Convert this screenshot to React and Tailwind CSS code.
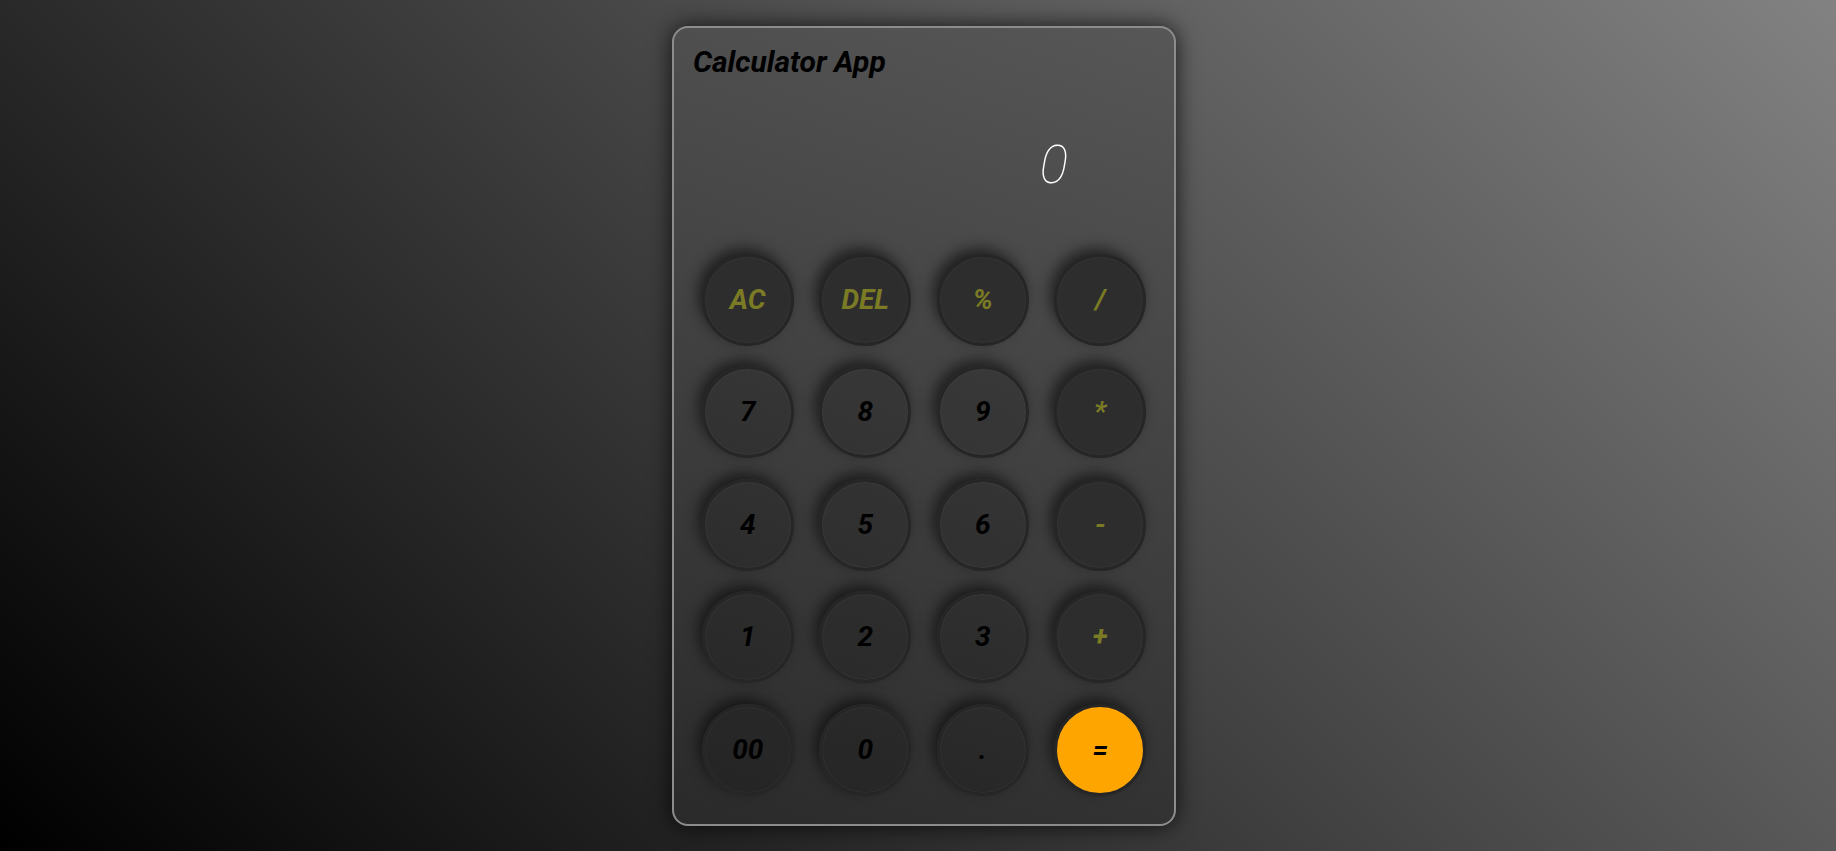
import React, { useState } from "react";

const keys = [
  { k: "AC", op: true },
  { k: "DEL", op: true },
  { k: "%", op: true },
  { k: "/", op: true },
  { k: "7" },
  { k: "8" },
  { k: "9" },
  { k: "*", op: true },
  { k: "4" },
  { k: "5" },
  { k: "6" },
  { k: "-", op: true },
  { k: "1" },
  { k: "2" },
  { k: "3" },
  { k: "+", op: true },
  { k: "00" },
  { k: "0" },
  { k: "." },
  { k: "=", eq: true },
];

export default function App() {
  const [value, setValue] = useState("0");

  const press = (k) => {
    if (k === "AC") return setValue("0");
    if (k === "DEL") return setValue((v) => (v.length > 1 ? v.slice(0, -1) : "0"));
    if (k === "=") {
      try {
        // eslint-disable-next-line no-new-func
        const r = Function(`return (${value})`)();
        setValue(String(r));
      } catch {
        setValue("Error");
      }
      return;
    }
    setValue((v) => (v === "0" && k !== "." ? k : v + k));
  };

  return (
    <div className="w-full h-[851px] flex items-center justify-center pl-[12px] bg-[linear-gradient(45deg,#000000,#828282)] font-['Roboto',sans-serif]">
      <div className="w-[504px] h-[800px] rounded-[16px] border-2 border-[#8c8c8c] bg-[linear-gradient(200deg,#575757,#2a2a2a)] shadow-[0_0_22px_rgba(0,0,0,0.75)] flex flex-col px-[19px] pt-[14px]">
        <h1 className="text-[30px] font-bold italic text-black leading-[40px]">Calculator App</h1>
        <div className="h-[150px] flex items-center justify-end pr-[87px] pt-[18px]">
          <span className="text-[53px] font-thin italic text-white leading-none">{value}</span>
        </div>
        <div className="grid grid-cols-[repeat(4,92px)] justify-center gap-x-[25.5px] gap-y-[20.5px] mt-[22px]">
          {keys.map(({ k, op, eq }) => (
            <button
              key={k}
              onClick={() => press(k)}
              className={
                "w-[92px] h-[92px] rounded-full border-[3px] border-[#262626] flex items-center justify-center text-[28px] font-bold italic shadow-[-4px_-6px_14px_rgba(0,0,0,0.55),inset_0_0_0_1px_rgba(255,255,255,0.04)] " +
                (eq
                  ? "bg-[#ffa500] text-black"
                  : op
                  ? "bg-[#2d2d2d] text-[#7b7b25]"
                  : "bg-black/[0.17] text-black")
              }
            >
              {k}
            </button>
          ))}
        </div>
      </div>
    </div>
  );
}
